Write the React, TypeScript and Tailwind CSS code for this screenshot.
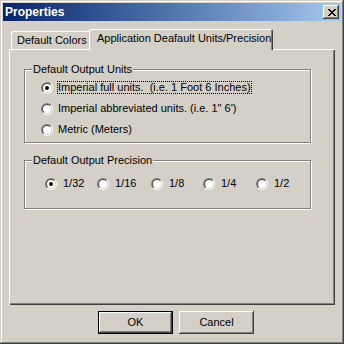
import React from "react";

const raised =
  "shadow-[inset_-1px_-1px_#404040,inset_1px_1px_#ffffff,inset_-2px_-2px_#808080,inset_2px_2px_#d4d0c8]";

function Radio({ checked }: { checked?: boolean }) {
  return (
    <div className="w-[12px] h-[12px] shrink-0 rounded-full border border-t-[#808080] border-l-[#808080] border-r-white border-b-white">
      <div className="w-full h-full rounded-full border border-t-[#404040] border-l-[#404040] border-r-[#d4d0c8] border-b-[#d4d0c8] bg-white flex items-center justify-center">
        {checked && <div className="w-[4px] h-[4px] rounded-full bg-black" />}
      </div>
    </div>
  );
}

function CloseGlyph() {
  const rows = [
    "XX....XX",
    ".XX..XX.",
    "..XXXX..",
    "...XX...",
    "..XXXX..",
    ".XX..XX.",
    "XX....XX",
  ];
  const rects: React.ReactElement[] = [];
  rows.forEach((r, y) =>
    r.split("").forEach((c, x) => {
      if (c === "X") rects.push(<rect key={`${x}-${y}`} x={x} y={y} width={1} height={1} fill="#000" />);
    })
  );
  return (
    <svg width="8" height="7" viewBox="0 0 8 7" shapeRendering="crispEdges">
      {rects}
    </svg>
  );
}

function GroupBox({ title, className, children }: { title: string; className: string; children: React.ReactNode }) {
  return (
    <div className={`relative border border-[#808080] shadow-[inset_1px_1px_#ffffff,1px_1px_#ffffff] ${className}`}>
      <div className="absolute left-[7px] -top-[7px] px-[1px] bg-[#d4d0c8] leading-[13px]">{title}</div>
      {children}
    </div>
  );
}

const units = [
  { label: "Imperial full units.  (i.e. 1 Foot 6 Inches)", checked: true },
  { label: "Imperial abbreviated units. (i.e. 1\" 6')", checked: false },
  { label: "Metric (Meters)", checked: false },
];

const precisions = [
  { label: "1/32", w: "w-[52px]", checked: true },
  { label: "1/16", w: "w-[54px]", checked: false },
  { label: "1/8", w: "w-[52px]", checked: false },
  { label: "1/4", w: "w-[53px]", checked: false },
  { label: "1/2", w: "w-[40px]", checked: false },
];

export default function App() {
  return (
    <div
      className="w-[344px] h-[344px] bg-[#d4d0c8] p-[3px] flex flex-col text-[11px] text-black shadow-[inset_-1px_-1px_#404040,inset_1px_1px_#d4d0c8,inset_-2px_-2px_#808080,inset_2px_2px_#ffffff]"
      style={{ fontFamily: "'Liberation Sans', Arial, sans-serif" }}
    >
      {/* Title bar */}
      <div className="h-[18px] flex items-center bg-linear-to-r from-[#0a246a] to-[#a6caf0] pl-[2px]">
        <span className="text-white font-bold text-[12px] leading-[14px]">Properties</span>
        <div className={`ml-auto mr-[2px] w-[16px] h-[14px] bg-[#d4d0c8] flex items-center justify-center pl-[1px] ${raised}`}>
          <CloseGlyph />
        </div>
      </div>

      {/* Body */}
      <div className="px-[6px] pt-[8px] flex flex-col">
        {/* Tabs */}
        <div className="relative z-10 flex items-end -mb-px">
          <div className="ml-[2px] mb-[1px] w-[78px] h-[18px] pl-[6px] pt-[3px] leading-[13px] rounded-tl-[2px] shadow-[inset_1px_1px_#ffffff]">
            Default Colors
          </div>
          <div className="w-[184px] h-[21px] pl-[8px] pt-[3px] leading-[13px] bg-[#d4d0c8] rounded-tl-[2px] rounded-tr-[2px] shadow-[inset_1px_1px_#ffffff,inset_-1px_0_#404040,inset_-2px_0_#808080]">
            Application Deafault Units/Precision
          </div>
        </div>

        {/* Panel */}
        <div className="h-[256px] pt-[20px] pl-[15px] shadow-[inset_1px_1px_#ffffff,inset_-1px_-1px_#404040,inset_-2px_-2px_#808080]">
          <GroupBox title="Default Output Units" className="w-[287px] h-[74px] pt-[7px] pl-[16px]">
            {units.map((u, i) => (
              <div key={i} className="h-[21px] flex items-center">
                <Radio checked={u.checked} />
                <span
                  className={`ml-[4px] border leading-[11px] whitespace-pre ${
                    i === 0 ? "border-dotted border-black" : "border-transparent"
                  }`}
                >
                  {u.label}
                </span>
              </div>
            ))}
          </GroupBox>

          <GroupBox title="Default Output Precision" className="mt-[17px] w-[287px] h-[49px] pt-[16px] pl-[20px]">
            <div className="flex items-center h-[13px]">
              {precisions.map((p, i) => (
                <div key={i} className={`${p.w} flex items-center shrink-0`}>
                  <Radio checked={p.checked} />
                  <span className="ml-[5px] border border-transparent leading-[11px]">{p.label}</span>
                </div>
              ))}
            </div>
          </GroupBox>
        </div>

        {/* Buttons */}
        <div className="mt-[6px] pl-[89px] flex gap-[6px]">
          <div className="w-[75px] h-[23px] border border-black bg-[#d4d0c8] flex items-center justify-center shadow-[inset_-1px_-1px_#404040,inset_1px_1px_#ffffff,inset_-2px_-2px_#808080]">
            OK
          </div>
          <div className={`w-[75px] h-[23px] bg-[#d4d0c8] flex items-center justify-center ${raised}`}>Cancel</div>
        </div>
      </div>
    </div>
  );
}
